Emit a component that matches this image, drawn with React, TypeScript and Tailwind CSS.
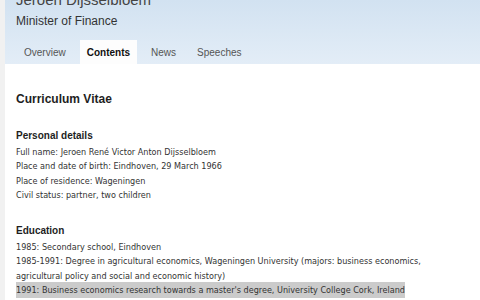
import React from "react";

const body = "font-['DejaVu_Sans_Condensed','DejaVu_Sans',sans-serif] text-[9px] leading-[14.5px] text-[#333]";

export default function App() {
  return (
    <div className="w-[480px] h-[300px] overflow-hidden bg-[#f1f1f1] pl-[5px] font-['Liberation_Sans',Arial,sans-serif]">
      <div className="h-full bg-white">
        <div className="h-[64px] bg-gradient-to-b from-[#d2e2f1] to-[#e3edf7] flex flex-col">
          <div className="pl-[11px] -mt-[9px] text-[15px] leading-[17px] text-[#444]">Jeroen Dijsselbloem</div>
          <div className="pl-[11px] mt-[6px] text-[12px] leading-[14px] text-[#333]">Minister of Finance</div>
          <div className="mt-auto flex gap-[7px] pl-[12px] text-[10px]">
            <div className="h-[24px] px-[7px] flex items-center text-[#555]">Overview</div>
            <div className="h-[24px] px-[7px] flex items-center bg-[#fdfdfd] font-bold text-[#111]">Contents</div>
            <div className="h-[24px] px-[7px] flex items-center text-[#555]">News</div>
            <div className="h-[24px] px-[7px] flex items-center text-[#555]">Speeches</div>
          </div>
        </div>
        <div className="pl-[11px]">
          <div className="mt-[27px] text-[12px] leading-[16px] font-bold text-[#1e1e1e]">Curriculum Vitae</div>
          <div className="mt-[21.75px] text-[10px] leading-[14.5px] font-bold text-[#1e1e1e]">Personal details</div>
          <div className={`mt-[1.5px] ${body}`}>
            <div>Full name: Jeroen René Victor Anton Dijsselbloem</div>
            <div>Place and date of birth: Eindhoven, 29 March 1966</div>
            <div>Place of residence: Wageningen</div>
            <div>Civil status: partner, two children</div>
          </div>
          <div className="mt-[21px] text-[10px] leading-[14.5px] font-bold text-[#1e1e1e]">Education</div>
          <div className={`mt-[1.5px] ${body}`}>
            <div>1985: Secondary school, Eindhoven</div>
            <div>1985-1991: Degree in agricultural economics, Wageningen University (majors: business economics,<br />agricultural policy and social and economic history)</div>
            <div><span className="bg-[#cbcbcb] py-[3px]">1991: Business economics research towards a master's degree, University College Cork, Ireland</span></div>
          </div>
        </div>
      </div>
    </div>
  );
}
